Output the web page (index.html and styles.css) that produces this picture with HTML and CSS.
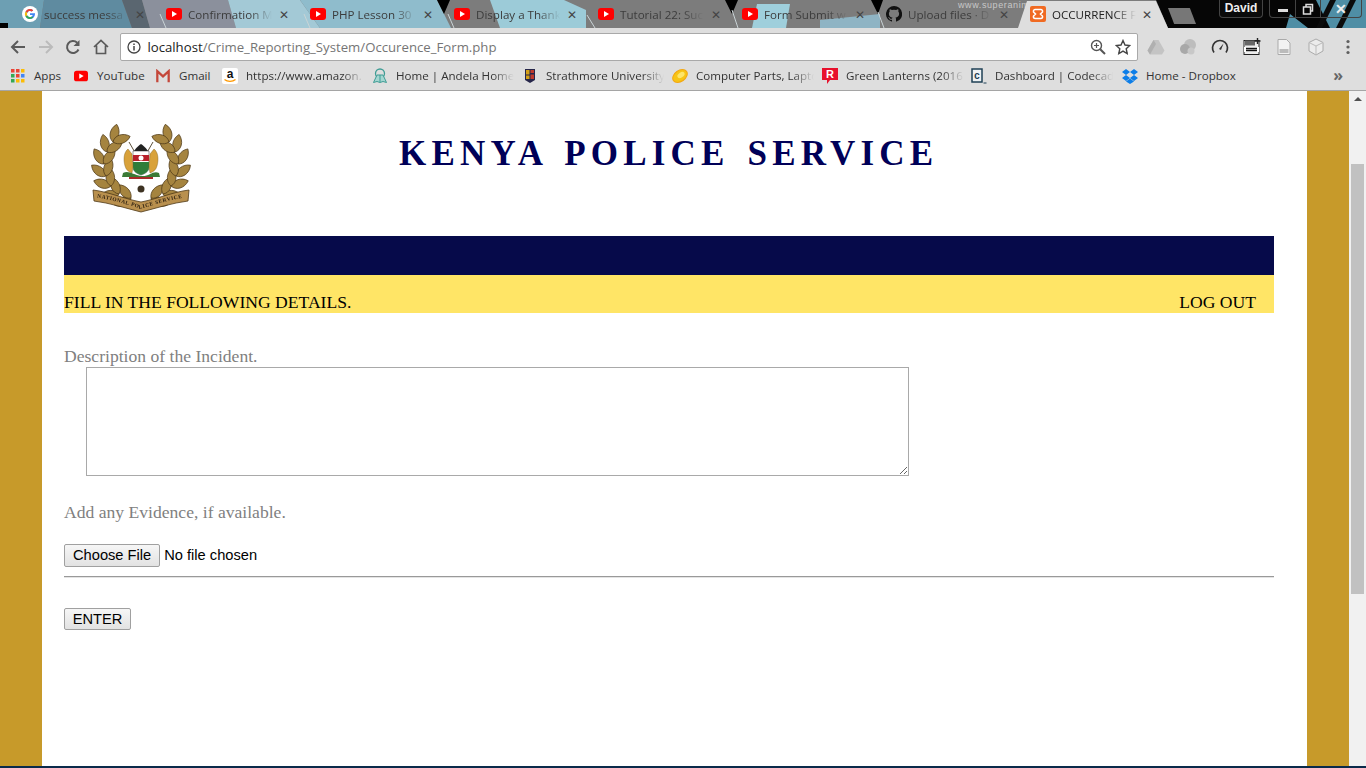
FILE: index.html
```html
<!DOCTYPE html>
<html lang="en">
<head>
    <meta charset="UTF-8">
    <title>OCCURRENCE FORM</title>
    <link rel="stylesheet" href="styles.css">
</head>
<body>
    <div class="browser">
        <div class="tabstrip">
            <svg class="wallpaper" width="1366" height="28" viewBox="0 0 1366 28">
                <rect width="1366" height="28" fill="#7c7c7c"/>
                <path d="M0 0h44l-4 28H0z" fill="#6d9fb3"/>
                <path d="M44 0h78l10 28H40z" fill="#5f8ba0"/>
                <path d="M122 0h20l8 28h-18z" fill="#5a6670"/>
                <path d="M142 0h86l8 28h-86z" fill="#8b909c"/>
                <path d="M228 0h72l20 28h-84z" fill="#a3c9d6"/>
                <path d="M300 0h137l14 28H320z" fill="#8fbccc"/>
                <path d="M490 0h74l22 10v18H500z" fill="#9ccbd8"/>
                <path d="M757 4h33l-4 24h-34z" fill="#9fcfdc"/>
                <path d="M820 20l60-6v14h-60z" fill="#8fb4c4"/>
                <path d="M1156 0h210v28h-198z" fill="#060606"/>
                <path d="M1316 0h50v28h-36zM1290 14l18 14h-22z" fill="#4f8ea5"/>
                <path d="M1330 0h6l-14 28h-6zM1350 0h6l-14 28h-6z" fill="#0b0b0b"/>
                <path d="M0 23h8v5H0zM437 0h13l-6 14zM725 0h13l-6 14zM871 0h12l-5 14z" fill="#000"/>
                <path d="M160 14l6 14M304 14l6 14M448 14l6 14M587 15l8 13M732 10l6 18M878 12l6 16" stroke="#c9d3d6" fill="none"/>
                <text x="958" y="8" class="wallpaper-text">www.superanim</text>
            </svg>
            <div class="tab"><svg class="favicon" viewBox="0 0 16 16"><circle cx="8" cy="8" r="8" fill="#fff"/><path d="M13 7.2H8v1.9h2.8A3 3 0 1 1 9.8 5.6l1.4-1.4A5 5 0 1 0 13 8z" fill="#4285f4"/><path d="M3.6 5.4 5.3 6.7A3 3 0 0 1 9.8 5.6l1.4-1.4a5 5 0 0 0-7.6 1.2z" fill="#ea4335"/><path d="M3.5 10.5 5.2 9.2A3 3 0 0 0 10 10.4l1.4 1.2a5 5 0 0 1-7.9-1.1z" fill="#34a853"/><path d="M3.5 10.5a5 5 0 0 1 .1-5.1l1.7 1.3a3 3 0 0 0-.1 2.5z" fill="#fbbc05"/></svg><span class="tab-title">success messa</span><span class="tab-x">✕</span></div>
            <div class="tab"><svg class="favicon" viewBox="0 0 16 16"><rect y="2" width="16" height="12" rx="3" fill="#f00"/><path d="M6 5l5 3-5 3z" fill="#fff"/></svg><span class="tab-title">Confirmation M</span><span class="tab-x">✕</span></div>
            <div class="tab"><svg class="favicon" viewBox="0 0 16 16"><rect y="2" width="16" height="12" rx="3" fill="#f00"/><path d="M6 5l5 3-5 3z" fill="#fff"/></svg><span class="tab-title">PHP Lesson 30</span><span class="tab-x">✕</span></div>
            <div class="tab"><svg class="favicon" viewBox="0 0 16 16"><rect y="2" width="16" height="12" rx="3" fill="#f00"/><path d="M6 5l5 3-5 3z" fill="#fff"/></svg><span class="tab-title">Display a Thank</span><span class="tab-x">✕</span></div>
            <div class="tab"><svg class="favicon" viewBox="0 0 16 16"><rect y="2" width="16" height="12" rx="3" fill="#f00"/><path d="M6 5l5 3-5 3z" fill="#fff"/></svg><span class="tab-title">Tutorial 22: Suc</span><span class="tab-x">✕</span></div>
            <div class="tab"><svg class="favicon" viewBox="0 0 16 16"><rect y="2" width="16" height="12" rx="3" fill="#f00"/><path d="M6 5l5 3-5 3z" fill="#fff"/></svg><span class="tab-title">Form Submit w</span><span class="tab-x">✕</span></div>
            <div class="tab"><svg class="favicon" viewBox="0 0 16 16"><path d="M8 0a8 8 0 0 0-2.5 15.6c.4.1.5-.2.5-.4v-1.4c-2.2.5-2.7-1-2.7-1-.4-.9-.9-1.2-.9-1.2-.7-.5.1-.5.1-.5.8.1 1.2.8 1.2.8.7 1.2 1.9.9 2.3.7.1-.5.3-.9.5-1.1-1.8-.2-3.6-.9-3.6-4 0-.9.3-1.6.8-2.1-.1-.2-.4-1 .1-2.1 0 0 .7-.2 2.2.8a7.500 7.500 0 0 1 4 0c1.500-1 2.200-.8 2.200-.8.4 1.100.2 1.900.1 2.100.5.5.8 1.200.8 2.100 0 3.100-1.900 3.800-3.700 4 .3.3.6.8.6 1.500v2.200c0 .2.1.5.6.4A8 8 0 0 0 8 0z" fill="#111"/></svg><span class="tab-title">Upload files · D</span><span class="tab-x">✕</span></div>
            <div class="tab tab-active"><svg class="favicon" viewBox="0 0 16 16"><rect width="16" height="16" rx="2" fill="#f06a22"/><path d="M5 3.5h6a1.800 1.800 0 0 1 .6 3.400L10.500 8l1.100 1.100A1.800 1.800 0 0 1 11 12.500H5a1.800 1.800 0 0 1-.6-3.400L5.500 8 4.400 6.900A1.800 1.800 0 0 1 5 3.500z" fill="none" stroke="#fff" stroke-width="1.600"/></svg><span class="tab-title">OCCURRENCE F</span><span class="tab-x">✕</span></div>
            <div class="new-tab"></div>
            <div class="window-btns">
                <span class="profile">David</span>
                <span class="win-group">
                    <span class="win-btn"><span class="win-min"></span></span>
                    <span class="win-btn"><svg width="12" height="12" viewBox="0 0 12 12"><path d="M1.5 4h7v7h-7zM4 4V1.5h6.500V8H8.500" fill="none" stroke="#ddd" stroke-width="1.500"/></svg></span>
                    <span class="win-btn win-close">✕</span>
                </span>
            </div>
        </div>
        <div class="toolbar">
            <svg class="tool-icon" viewBox="0 0 16 16"><path d="M15 8H2M8 2 2 8l6 6" fill="none" stroke="#5a5a5a" stroke-width="2"/></svg>
            <svg class="tool-icon" viewBox="0 0 16 16"><path d="M1 8h13M8 2l6 6-6 6" fill="none" stroke="#bbb" stroke-width="2"/></svg>
            <svg class="tool-icon" viewBox="0 0 16 16"><path d="M13.500 10.500A6 6 0 1 1 12.200 3.700" fill="none" stroke="#5a5a5a" stroke-width="2"/><path d="M14.500 1v6h-6z" fill="#5a5a5a"/></svg>
            <svg class="tool-icon" viewBox="0 0 16 16"><path d="M1 8l7-6.500L15 8M3.500 6.500V14.500h9V6.500" fill="none" stroke="#5a5a5a" stroke-width="1.700"/></svg>
            <div class="omnibox">
                <svg class="info-icon" viewBox="0 0 14 14"><circle cx="7" cy="7" r="6" fill="none" stroke="#444" stroke-width="1.300"/><path d="M7 6v4.500M7 3.500v1.400" stroke="#444" stroke-width="1.500"/></svg>
                <span class="url"><span class="url-host">localhost</span>/Crime_Reporting_System/Occurence_Form.php</span>
                <svg class="omni-icon" viewBox="0 0 16 16"><circle cx="6.500" cy="6.500" r="5" fill="none" stroke="#555" stroke-width="1.400"/><path d="M10.200 10.200 15 15" stroke="#555" stroke-width="2"/><path d="M6.500 4v5M4 6.500h5" stroke="#555" stroke-width="1.200"/></svg>
                <svg class="omni-icon" viewBox="0 0 16 16"><path d="M8 1.500l2 4.500 4.800.5-3.600 3.200 1 4.800L8 12.100 3.800 14.500l1-4.800L1.200 6.500 6 6z" fill="none" stroke="#444" stroke-width="1.400"/></svg>
            </div>
            <div class="extensions">
                <svg class="ext-icon" viewBox="0 0 18 18"><path d="M6.500 2h5l6 10.500-2.500 4H3L.5 12.500z" fill="#c4c4c4"/><path d="M6.500 2 .5 12.500 3 16.500 9 6z" fill="#b0b0b0"/></svg>
                <svg class="ext-icon" viewBox="0 0 18 18"><circle cx="11" cy="7" r="6" fill="#bdbdbd"/><circle cx="6" cy="11" r="5" fill="#a8a8a8"/><circle cx="12" cy="13" r="3.500" fill="#c8c8c8"/></svg>
                <svg class="ext-icon" viewBox="0 0 18 18"><path d="M3 14.500A7.500 7.500 0 1 1 15 14.500" fill="none" stroke="#333" stroke-width="1.700"/><path d="M8 11l4.500-5.500L10 12z" fill="#333"/></svg>
                <svg class="ext-icon" viewBox="0 0 18 18"><rect x="1" y="2.500" width="15" height="14" fill="#eee" stroke="#222"/><rect x="1" y="9" width="15" height="5" fill="#fff"/><path d="M2 2.500h10v5H2z" fill="#666"/><path d="M14.500 0v6M11.500 3h6" stroke="#222" stroke-width="1.400"/><path d="M3 10.500h11M3 12.500h11" stroke="#111" stroke-width="1.300"/></svg>
                <svg class="ext-icon" viewBox="0 0 18 18"><path d="M3 1.500h8.500L15 5v11.500H3z" fill="#f2f2f2" stroke="#aaa"/><rect x="4.500" y="11" width="9" height="4" fill="#bbb"/></svg>
                <svg class="ext-icon" viewBox="0 0 18 18"><path d="M9 1l7 3.500v8.500L9 17l-7-4V4.500z" fill="#ececec" stroke="#aaa"/><path d="M2 4.500 9 8l7-3.500M9 8v9" fill="none" stroke="#bbb"/></svg>
                <svg class="ext-icon" viewBox="0 0 18 18"><circle cx="9" cy="3.500" r="1.600" fill="#5f5f5f"/><circle cx="9" cy="9" r="1.600" fill="#5f5f5f"/><circle cx="9" cy="14.500" r="1.600" fill="#5f5f5f"/></svg>
            </div>
        </div>
        <div class="bookmarks">
            <span class="bm bm-apps"><svg class="bm-icon bm-icon-small" viewBox="0 0 14 14"><rect width="3.500" height="3.500" x="0" y="0" fill="#ea4335"/><rect width="3.500" height="3.500" x="5" y="0" fill="#ea4335"/><rect width="3.500" height="3.500" x="10" y="0" fill="#fbbc05"/><rect width="3.500" height="3.500" x="0" y="5" fill="#34a853"/><rect width="3.500" height="3.500" x="5" y="5" fill="#ea4335"/><rect width="3.500" height="3.500" x="10" y="5" fill="#4285f4"/><rect width="3.500" height="3.500" x="0" y="10" fill="#34a853"/><rect width="3.500" height="3.500" x="5" y="10" fill="#fbbc05"/><rect width="3.500" height="3.500" x="10" y="10" fill="#fbbc05"/></svg><span class="bm-text">Apps</span></span>
            <span class="bm bm-yt"><svg class="bm-icon bm-icon-small" viewBox="0 0 16 16"><rect y="2" width="16" height="12" rx="3" fill="#f00"/><path d="M6 5l5 3-5 3z" fill="#fff"/></svg><span class="bm-text">YouTube</span></span>
            <span class="bm bm-gmail"><svg class="bm-icon bm-icon-small" viewBox="0 0 16 16"><path d="M1.500 15V2.500L8 8.500l6.500-6V15" fill="none" stroke="#c4473a" stroke-width="2.600"/></svg><span class="bm-text">Gmail</span></span>
            <span class="bm bm-amazon"><svg class="bm-icon" viewBox="0 0 16 16"><rect width="16" height="16" rx="2" fill="#fff"/><text x="8" y="10" text-anchor="middle" class="amazon-a">a</text><path d="M2.500 11.500c3 2.500 8 2.500 11 0" fill="none" stroke="#f90" stroke-width="1.400"/></svg><span class="bm-text bm-fade">https://www.amazon.</span></span>
            <span class="bm bm-andela"><svg class="bm-icon" viewBox="0 0 16 16"><circle cx="8" cy="5.500" r="4.500" fill="none" stroke="#3f9d95" stroke-width="1.300"/><path d="M1.500 14.500 5 7h6l3.500 7.500-3.500-1-3 1-3-1z" fill="#a5d6d1" stroke="#3f9d95"/><path d="M8 7v7" stroke="#3f9d95"/></svg><span class="bm-text bm-fade">Home | Andela Home</span></span>
            <span class="bm bm-strath"><svg class="bm-icon" viewBox="0 0 16 16"><path d="M3 1h10v11l-5 3-5-3z" fill="#26264a"/><path d="M4 2h3.500v4.500H4z" fill="#d4a017"/><path d="M8.500 6.500H12V11H8.500z" fill="#c0392b"/><path d="M8.500 2H12v3H8.500z" fill="#c0392b"/><path d="M4 7.500h3.500V11H4z" fill="#d4a017"/></svg><span class="bm-text bm-fade">Strathmore University</span></span>
            <span class="bm bm-parts"><svg class="bm-icon" viewBox="0 0 16 16"><ellipse cx="8" cy="8" rx="8" ry="5.500" transform="rotate(-35 8 8)" fill="#f7c415" stroke="#f3a712"/><ellipse cx="9" cy="7" rx="4" ry="2.500" transform="rotate(-35 9 7)" fill="#fde56b"/></svg><span class="bm-text bm-fade">Computer Parts, Lapto</span></span>
            <span class="bm bm-lantern"><svg class="bm-icon" viewBox="0 0 16 16"><path d="M0 0h16v12H8l-3 4v-4H0z" fill="#e8112d"/><text x="8" y="10" text-anchor="middle" class="lantern-r">R</text></svg><span class="bm-text bm-fade">Green Lanterns (2016</span></span>
            <span class="bm bm-codecademy"><svg class="bm-icon" viewBox="0 0 16 16"><rect x="1" y="1" width="10" height="13" fill="#eef2f4" stroke="#1f4056" stroke-width="1.500"/><text x="6" y="11" text-anchor="middle" class="codecademy-c">c</text><path d="M12.500 15h3" stroke="#1f4056"/></svg><span class="bm-text bm-fade">Dashboard | Codecad</span></span>
            <span class="bm bm-dropbox"><svg class="bm-icon" viewBox="0 0 16 16"><path d="M4 1 0 4l4 3 4-3zM12 1 8 4l4 3 4-3zM4 7 0 10l4 3 4-3zM12 7l-4 3 4 3 4-3zM4 13.500l4 2.500 4-2.500-4-3z" fill="#0d7ee8"/></svg><span class="bm-text">Home - Dropbox</span></span>
            <span class="bm-more">»</span>
        </div>
    </div>

    <div class="viewport">
        <div class="page">
            <div class="masthead">
                <svg class="crest" width="100" height="90" viewBox="0 0 96 90">
                    <defs>
                        <path id="leaf" d="M0 0C3-6 12-7 18-1 13 5 4 5 0 0z" fill="#a5843f" stroke="#4f3a18" stroke-width=".7"/>
                        <g id="branch">
                            <use href="#leaf" transform="translate(38 74) rotate(160)"/>
                            <use href="#leaf" transform="translate(38 74) rotate(230)"/>
                            <use href="#leaf" transform="translate(26 70) rotate(180)"/>
                            <use href="#leaf" transform="translate(26 70) rotate(250)"/>
                            <use href="#leaf" transform="translate(18 62) rotate(200)"/>
                            <use href="#leaf" transform="translate(18 62) rotate(270)"/>
                            <use href="#leaf" transform="translate(13 52) rotate(220)"/>
                            <use href="#leaf" transform="translate(13 52) rotate(290)"/>
                            <use href="#leaf" transform="translate(11 40) rotate(240)"/>
                            <use href="#leaf" transform="translate(11 40) rotate(310)"/>
                            <use href="#leaf" transform="translate(14 28) rotate(260)"/>
                            <use href="#leaf" transform="translate(14 28) rotate(330)"/>
                            <use href="#leaf" transform="translate(20 18) rotate(285)"/>
                            <use href="#leaf" transform="translate(20 18) rotate(345)"/>
                        </g>
                    </defs>
                    <g class="crest-art">
                        <use href="#branch"/>
                        <use href="#branch" transform="translate(96 0) scale(-1 1)"/>
                        <path d="M36 18l8 14M60 18l-8 14" stroke="#4a3a22" stroke-width=".9"/>
                        <path d="M41 27c3-4 5-6 7-7 2 1 4 3 7 7z" fill="#222"/>
                        <path d="M40 27h16v16c0 5-5 7-8 8-3-1-8-3-8-8z" fill="#fff" stroke="#333" stroke-width=".5"/>
                        <path d="M40 31h16v6H40z" fill="#b8202a"/>
                        <path d="M40 38h16v5c0 5-5 7-8 8-3-1-8-3-8-8z" fill="#2f7d3a"/>
                        <circle cx="48" cy="34" r="2.500" fill="#fff"/>
                        <path d="M35 25c-4 3-5 10-3 17 1 4 4 6 7 7l1-6-1-13z" fill="#d9a23a" stroke="#7a5a1a" stroke-width=".4"/>
                        <path d="M61 25c4 3 5 10 3 17-1 4-4 6-7 7l-1-6 1-13z" fill="#d9a23a" stroke="#7a5a1a" stroke-width=".4"/>
                        <path d="M30 49c6-3 10 2 18 3s12-6 18-3l1 4H29z" fill="#3b7a36"/>
                        <path d="M36 53h24v2H36z" fill="#a82a2a"/>
                        <circle cx="48" cy="65" r="3.500" fill="#3d3222"/>
                        <path d="M0 66c16 2 32 9 48 12 16-3 32-10 48-12l-1 11c-16 2-31 7-47 11-16-4-31-9-47-11z" fill="#b9904e" stroke="#4f3a18" stroke-width=".8"/>
                        <path id="ribbonText" d="M4 73.500c15 2 29 7 44 11 15-4 29-9 44-11" fill="none"/>
                        <text class="crest-text"><textPath href="#ribbonText">NATIONAL POLICE SERVICE</textPath></text>
                    </g>
                </svg>
                <h1 class="title">KENYA POLICE SERVICE</h1>
            </div>
            <div class="navy-bar"></div>
            <div class="notice-bar">
                <span>FILL IN THE FOLLOWING DETAILS.</span>
                <span class="logout">LOG OUT</span>
            </div>
            <form class="occurrence-form">
                <label class="field-label" for="description">Description of the Incident.</label>
                <textarea id="description" class="description"></textarea>
                <label class="field-label evidence-label" for="evidence">Add any Evidence, if available.</label>
                <input type="file" id="evidence" class="evidence">
                <hr class="rule">
                <button type="button" class="enter-btn">ENTER</button>
            </form>
        </div>
        <div class="scrollbar">
            <span class="scroll-up"></span>
            <span class="scroll-thumb"></span>
        </div>
    </div>
    <div class="screen-edge"></div>
</body>
</html>
```

FILE: styles.css
```css
html, body {
    margin: 0;
    padding: 0;
    height: 100%;
    overflow: hidden;
}
body {
    font-family: "Liberation Serif", serif;
    display: flex;
    flex-direction: column;
    background-color: #c79a2a;
}

/* browser chrome */
.browser {
    height: 91px;
    flex-shrink: 0;
    background-color: #dedede;
    font-family: "Open Sans", "Liberation Sans", sans-serif;
}
.tabstrip {
    position: relative;
    height: 28px;
    display: flex;
    padding-left: 13px;
    overflow: hidden;
    background-color: #000;
}
.wallpaper {
    position: absolute;
    left: 0;
    top: 0;
}
.wallpaper-text {
    font: 9px "Liberation Sans", sans-serif;
    letter-spacing: .6px;
    fill: #c8c8c8;
}
.tab {
    position: relative;
    width: 144px;
    height: 28px;
    box-sizing: border-box;
    padding: 0 12px 0 9px;
    display: flex;
    align-items: center;
    flex-shrink: 0;
    font-size: 11.6px;
    color: #3c3c3c;
}
.tab-active {
    width: 150px;
    margin-left: -3px;
    padding: 0 16px 0 12px;
    background-color: #dedede;
    color: #222;
    clip-path: polygon(0 100%, 9px 1px, calc(100% - 12px) 1px, 100% 100%);
}
.favicon {
    width: 16px;
    height: 16px;
    flex-shrink: 0;
    margin-right: 6px;
}
.tab-title {
    flex: 1;
    white-space: nowrap;
    -webkit-mask-image: linear-gradient(to right, #000 62px, transparent 84px);
    mask-image: linear-gradient(to right, #000 62px, transparent 84px);
}
.tab-x {
    font-size: 12px;
    color: #444;
    margin-left: 4px;
}
.new-tab {
    position: relative;
    width: 28px;
    height: 16px;
    margin: 8px 0 0 0;
    background-color: #777;
    clip-path: polygon(0 0, 78% 0, 100% 100%, 22% 100%);
}
.window-btns {
    position: absolute;
    right: 0;
    top: 0;
    display: flex;
    height: 18px;
    color: #eee;
    font-family: "Liberation Sans", sans-serif;
    font-size: 12px;
}
.profile {
    width: 42px;
    height: 17px;
    line-height: 17px;
    text-align: center;
    font-weight: bold;
    background-color: #0a0a0a;
    border: 1px solid #444;
    border-top: none;
    border-radius: 0 0 4px 4px;
    margin-right: 6px;
}
.win-group {
    display: flex;
    margin-right: 4px;
    border: 1px solid #444;
    border-top: none;
    border-radius: 0 0 4px 4px;
}
.win-btn {
    width: 25px;
    height: 17px;
    box-sizing: border-box;
    display: flex;
    align-items: center;
    justify-content: center;
    font-weight: bold;
    border-left: 1px solid #444;
}
.win-btn:first-child {
    border-left: none;
}
.win-min {
    width: 10px;
    height: 3px;
    margin-top: 3px;
    background-color: #ddd;
}
.win-close {
    width: 41px;
    font-size: 14px;
}
.toolbar {
    height: 33px;
    box-sizing: border-box;
    display: flex;
    align-items: center;
    padding: 5px 10px 0 10px;
}
.tool-icon {
    width: 16px;
    height: 16px;
    margin-right: 11.6px;
    flex-shrink: 0;
}
.omnibox {
    width: 1018px;
    height: 28px;
    box-sizing: border-box;
    padding: 0 6px;
    display: flex;
    align-items: center;
    gap: 9px;
    background-color: #fff;
    border: 1px solid #a9a9a9;
    border-radius: 2px;
    flex-shrink: 0;
}
.info-icon {
    width: 14px;
    height: 14px;
}
.url {
    flex: 1;
    margin-left: -3px;
    font-size: 13.2px;
    color: #757575;
    white-space: nowrap;
}
.url-host {
    color: #222;
}
.omni-icon {
    width: 16px;
    height: 16px;
}
.extensions {
    display: flex;
    align-items: center;
    gap: 14px;
    margin-left: 9px;
}
.ext-icon {
    width: 18px;
    height: 18px;
}
.bookmarks {
    height: 30px;
    box-sizing: border-box;
    display: flex;
    align-items: center;
    position: relative;
    padding-left: 11px;
    font-size: 11.6px;
    color: #333;
    border-bottom: 1px solid #a5a5a5;
}
.bm {
    display: flex;
    align-items: center;
    flex-shrink: 0;
}
.bm-icon {
    width: 16px;
    height: 16px;
    flex-shrink: 0;
    margin-right: 8px;
}
.bm-icon-small {
    width: 14px;
    height: 14px;
    margin-right: 9px;
}
.bm-text {
    white-space: nowrap;
}
.bm-fade {
    -webkit-mask-image: linear-gradient(to right, #000 96px, transparent 118px);
    mask-image: linear-gradient(to right, #000 96px, transparent 118px);
}
.bm-apps { width: 63px; }
.bm-yt { width: 82px; }
.bm-gmail { width: 66px; }
.bm-amazon { width: 150px; }
.bm-andela { width: 150px; }
.bm-strath { width: 150px; }
.bm-parts { width: 150px; }
.bm-lantern { width: 149px; }
.bm-codecademy { width: 151px; }
.bm-more {
    position: absolute;
    right: 23px;
    top: 3px;
    font-size: 16px;
    font-weight: bold;
    color: #666;
}
.amazon-a {
    font: bold 12px "Liberation Sans", sans-serif;
    fill: #111;
}
.lantern-r {
    font: bold 11px "Liberation Sans", sans-serif;
    fill: #fff;
}
.codecademy-c {
    font: bold 10px "Liberation Mono", monospace;
    fill: #1f4056;
}

/* page */
.viewport {
    flex: 1;
    display: flex;
    min-height: 0;
}
.page {
    flex: 1;
    margin: 0 42px;
    padding: 0 33px 0 22px;
    background-color: #fff;
}
.masthead {
    height: 145px;
    display: flex;
    padding-top: 33px;
    box-sizing: border-box;
}
.crest {
    margin-left: 27px;
    flex-shrink: 0;
}
.crest-art {
    filter: blur(.3px);
}
.crest-text {
    font: bold 5.4px "Liberation Serif", serif;
    letter-spacing: .55px;
    fill: #2d2010;
}
.title {
    margin: 6px 0 0 208px;
    font-size: 35px;
    line-height: 48px;
    letter-spacing: 5.2px;
    word-spacing: 4px;
    color: #000058;
    white-space: nowrap;
}
.navy-bar {
    height: 39px;
    background-color: #060a4a;
}
.notice-bar {
    height: 38px;
    box-sizing: border-box;
    display: flex;
    justify-content: space-between;
    padding: 17px 18px 0 0;
    background-color: #ffe566;
    font-size: 17.6px;
    line-height: 20px;
    color: #000;
}
.occurrence-form {
    display: block;
}
.field-label {
    display: block;
    margin-top: 33px;
    font-size: 17.6px;
    line-height: 21px;
    color: #808080;
}
.description {
    display: block;
    width: 823px;
    height: 109px;
    box-sizing: border-box;
    margin: 0 0 0 22px;
    border: 1px solid #a9a9a9;
    background-color: #fff;
}
.evidence-label {
    margin-top: 26px;
}
.evidence {
    display: block;
    height: 23px;
    margin-top: 21px;
    font-family: "Liberation Sans", sans-serif;
    font-size: 14.67px;
}
.evidence::file-selector-button {
    height: 23px;
    margin-right: 4px;
    padding: 0 8px 2px;
    font: inherit;
    background: linear-gradient(#f6f6f6, #e2e2e2);
    border: 1px solid #a0a0a0;
    border-radius: 2px;
}
.rule {
    margin: 9px 0 0 0;
    border: none;
    border-top: 1px solid #999;
    border-bottom: 1px solid #e4e4e4;
}
.enter-btn {
    display: block;
    margin-top: 30px;
    height: 22px;
    width: 67px;
    padding: 0;
    font-family: "Liberation Sans", sans-serif;
    font-size: 14.67px;
    color: #000;
    background: linear-gradient(#f6f6f6, #e2e2e2);
    border: 1px solid #a0a0a0;
    border-radius: 2px;
}
.scrollbar {
    width: 17px;
    flex-shrink: 0;
    background-color: #f1f1f1;
    display: flex;
    flex-direction: column;
    align-items: center;
}
.scroll-up {
    width: 0;
    height: 0;
    margin-top: 6px;
    border: 4px solid transparent;
    border-top: none;
    border-bottom: 4px solid #505050;
}
.scroll-thumb {
    width: 13px;
    height: 430px;
    margin-top: 63px;
    background-color: #c1c1c1;
}
.screen-edge {
    height: 2px;
    flex-shrink: 0;
    background-color: #0a2a4a;
}
```
